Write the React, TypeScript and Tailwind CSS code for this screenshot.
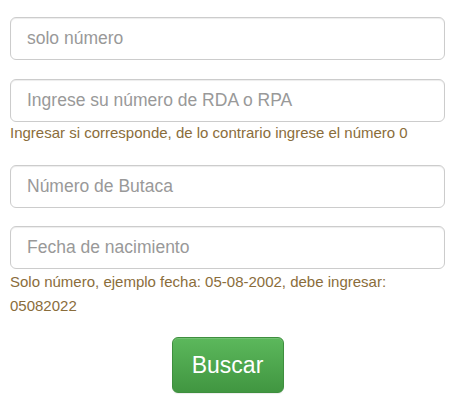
export default function App() {
  const inputCls =
    'block w-full h-[43px] rounded-md border border-[#cccccc] bg-white px-4 text-[17.5px] text-[#555] placeholder:text-[#999] shadow-[inset_0_1px_1px_rgba(0,0,0,0.075)] outline-none'

  return (
    <div className="min-h-screen bg-white px-[10px] pt-[17px] font-['Liberation_Sans',Arial,sans-serif]">
      <form className="w-[435px]" onSubmit={(e) => e.preventDefault()}>
        <input type="text" placeholder="solo número" className={inputCls} />

        <div className="mt-[19px]">
          <input type="text" placeholder="Ingrese su número de RDA o RPA" className={inputCls} />
          <p className="mt-[1px] text-[15px] leading-[20px] text-[#8a6d3b]">
            Ingresar si corresponde, de lo contrario ingrese el número 0
          </p>
        </div>

        <input type="text" placeholder="Número de Butaca" className={`${inputCls} mt-[22px]`} />

        <div className="mt-[18px]">
          <input type="text" placeholder="Fecha de nacimiento" className={inputCls} />
          <p className="mt-[1px] text-[15px] leading-[24px] text-[#8a6d3b]">
            Solo número, ejemplo fecha: 05-08-2002, debe ingresar: 05082022
          </p>
        </div>

        <div className="mt-[19px] flex justify-center">
          <button
            type="submit"
            className="h-[56px] w-[112px] rounded-md border border-[#3e8f3e] bg-gradient-to-b from-[#5cb85c] to-[#419641] text-[23px] text-white shadow-[inset_0_1px_0_rgba(255,255,255,0.15),0_1px_1px_rgba(0,0,0,0.075)]"
          >
            Buscar
          </button>
        </div>
      </form>
    </div>
  )
}
